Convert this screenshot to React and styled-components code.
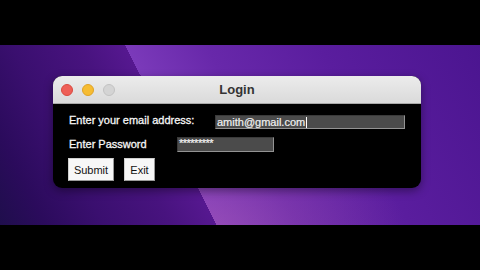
import React from 'react';
import styled, { createGlobalStyle } from 'styled-components';

const Global = createGlobalStyle`
  html, body {
    margin: 0;
    padding: 0;
    background: #000;
  }
  body {
    font-family: "Liberation Sans", Arial, sans-serif;
  }
`;

const Screen = styled.div`
  width: 480px;
  height: 270px;
  padding: 45px 0;
  box-sizing: border-box;
  background: #000;
  overflow: hidden;
`;

const Wallpaper = styled.div`
  height: 180px;
  padding: 31px 0 0 53px;
  box-sizing: border-box;
  background:
    linear-gradient(63deg, #1f0e4c 0%, #2b0b5c 8%, #3a0f6f 18%, #48137f 30%, #561890 37.9%, transparent 37.9%),
    radial-gradient(ellipse 40% 50% at 44% 100%, rgba(185, 100, 180, 0.4), rgba(185, 100, 180, 0) 100%),
    linear-gradient(63deg, #7b3aba 37.9%, #6828aa 52%, #5a1d9e 72%, #4b1590 100%);
`;

const Window = styled.div`
  width: 368px;
  height: 112px;
  border-radius: 9px;
  overflow: hidden;
  background: #000;
  box-shadow: 0 3px 10px rgba(0, 0, 0, 0.4);
  display: flex;
  flex-direction: column;
`;

const TitleBar = styled.div`
  height: 28px;
  box-sizing: border-box;
  display: grid;
  grid-template-columns: 1fr auto 1fr;
  align-items: center;
  padding: 0 8px;
  background: linear-gradient(#ececec, #dadada);
  border-bottom: 1px solid #a9a9a9;
`;

const Lights = styled.div`
  display: flex;
  gap: 9px;
`;

const Light = styled.span`
  width: 12px;
  height: 12px;
  border-radius: 50%;
  box-sizing: border-box;
  background: ${p => p.$color};
  border: 1px solid ${p => p.$edge};
`;

const Title = styled.div`
  font-size: 13px;
  font-weight: bold;
  color: #333;
  padding-bottom: 1px;
`;

const Body = styled.div`
  flex: 1;
  display: flex;
  flex-direction: column;
  padding: 11px 0 7px 15px;
`;

const Row = styled.div`
  display: flex;
  align-items: center;
  margin-bottom: ${p => p.$gap}px;
`;

const Label = styled.div`
  width: ${p => p.$width}px;
  padding-left: 1px;
  margin-top: ${p => p.$lift}px;
  font-size: 11px;
  color: #f6f6f6;
  -webkit-text-stroke: 0.3px #f6f6f6;
  white-space: nowrap;
`;

const Entry = styled.div`
  width: ${p => p.$width}px;
  height: ${p => p.$height}px;
  box-sizing: border-box;
  display: flex;
  align-items: center;
  padding-left: 1px;
  background: #4b4b4b;
  border: 1px solid #3a3a3a;
  border-right-color: #939393;
  border-bottom-color: #939393;
  font-size: 11px;
  color: #f2f2f2;
  -webkit-text-stroke: 0.2px #f2f2f2;
  white-space: nowrap;
  line-height: 1;
`;

const Stars = styled.span`
  font-size: 11px;
  letter-spacing: -0.5px;
  margin-top: -3px;
`;

const Caret = styled.span`
  display: inline-block;
  width: 1px;
  height: 11px;
  margin-left: 1px;
  background: #fff;
`;

const Buttons = styled.div`
  display: flex;
  gap: 10px;
`;

const Button = styled.button`
  width: ${p => p.$width}px;
  height: 23px;
  padding: 0;
  box-sizing: border-box;
  background: #f7f7f7;
  border: 1px solid #d0d0d0;
  border-right-color: #9a9a9a;
  border-bottom-color: #9a9a9a;
  border-radius: 0;
  font-family: "Liberation Sans", Arial, sans-serif;
  font-size: 11px;
  color: #111;
`;

export default function App() {
  return (
    <>
      <Global />
      <Screen>
        <Wallpaper>
          <Window>
            <TitleBar>
              <Lights>
                <Light $color="#ee5f57" $edge="#d9493f" />
                <Light $color="#f6bc32" $edge="#dea227" />
                <Light $color="#d4d4d4" $edge="#c2c2c2" />
              </Lights>
              <Title>Login</Title>
              <span />
            </TitleBar>
            <Body>
              <Row $gap={8}>
                <Label $width={146} $lift={-5}>Enter your email address:</Label>
                <Entry $width={190} $height={14}>
                  amith@gmail.com<Caret />
                </Entry>
              </Row>
              <Row $gap={6}>
                <Label $width={108} $lift={-2}>Enter Password</Label>
                <Entry $width={97} $height={15}>
                  <Stars>*********</Stars>
                </Entry>
              </Row>
              <Buttons>
                <Button $width={46}>Submit</Button>
                <Button $width={31}>Exit</Button>
              </Buttons>
            </Body>
          </Window>
        </Wallpaper>
      </Screen>
    </>
  );
}
